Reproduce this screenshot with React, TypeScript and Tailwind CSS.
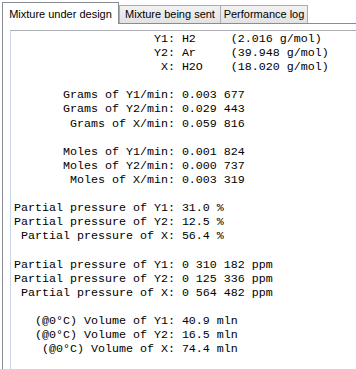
const lines = [
  '                    Y1: H2     (2.016 g/mol)',
  '                    Y2: Ar     (39.948 g/mol)',
  '                     X: H2O    (18.020 g/mol)',
  '',
  '       Grams of Y1/min: 0.003 677',
  '       Grams of Y2/min: 0.029 443',
  '        Grams of X/min: 0.059 816',
  '',
  '       Moles of Y1/min: 0.001 824',
  '       Moles of Y2/min: 0.000 737',
  '        Moles of X/min: 0.003 319',
  '',
  'Partial pressure of Y1: 31.0 %',
  'Partial pressure of Y2: 12.5 %',
  ' Partial pressure of X: 56.4 %',
  '',
  'Partial pressure of Y1: 0 310 182 ppm',
  'Partial pressure of Y2: 0 125 336 ppm',
  ' Partial pressure of X: 0 564 482 ppm',
  '',
  '   (@0°C) Volume of Y1: 40.9 mln',
  '   (@0°C) Volume of Y2: 16.5 mln',
  '    (@0°C) Volume of X: 74.4 mln',
]

const tabFont = "font-['Liberation_Sans',Arial,sans-serif] text-[11px] text-black whitespace-nowrap"

export default function App() {
  return (
    <div className="h-[369px] w-[356px] overflow-hidden bg-white">
      {/* tab strip */}
      <div className="relative z-10 flex h-[23px] items-end pl-[2px]">
        <div
          className={`-mb-px flex h-[22px] w-[117px] items-start justify-center border border-b-0 border-[#898c95] bg-white pt-[3px] ${tabFont}`}
        >
          Mixture under design
        </div>
        <div
          className={`flex h-[18px] w-[102px] items-center justify-center border border-b-0 border-[#acacac] bg-gradient-to-b from-[#f2f2f2] to-[#e2e2e2] ${tabFont}`}
        >
          Mixture being sent
        </div>
        <div
          className={`-ml-px flex h-[18px] w-[88px] items-center justify-center border border-b-0 border-[#acacac] bg-gradient-to-b from-[#f2f2f2] to-[#e2e2e2] ${tabFont}`}
        >
          Performance log
        </div>
      </div>

      {/* tab panel */}
      <div className="ml-[2px] h-[400px] border-l border-t border-[#898c95] pl-[7px] pt-[6px]">
        <div className="h-[400px] border-l border-t border-l-[#c9d6e8] border-t-[#abadb3] pl-[3px] pt-px">
          <pre className="font-['Liberation_Mono','Courier_New',monospace] text-[11.67px] leading-[14.1px] text-black">
            {lines.join('\n')}
          </pre>
        </div>
      </div>
    </div>
  )
}
